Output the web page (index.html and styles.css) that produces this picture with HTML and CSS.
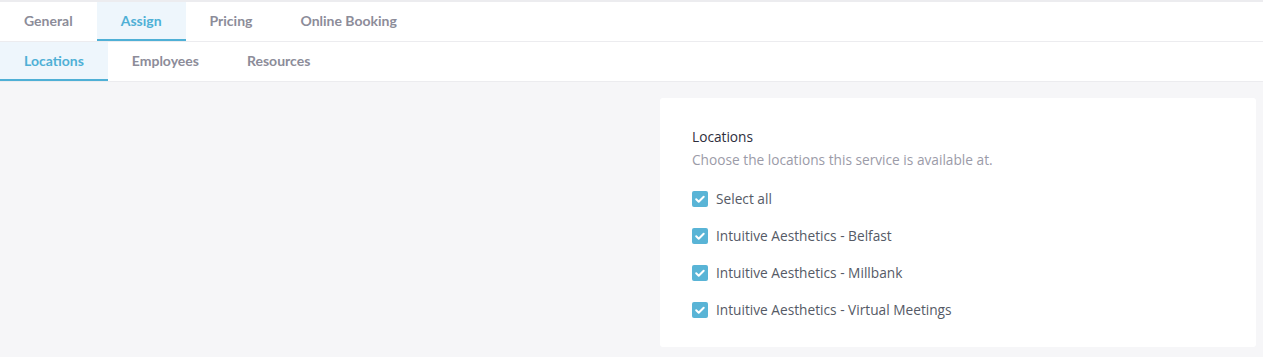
FILE: index.html
```html
<!DOCTYPE html>
<html>
  <head>
    <title>Service - Assign</title>
    <meta charset="UTF-8">
    <meta name="viewport" content="width=device-width, initial-scale=1.0">
    <link rel="stylesheet" href="styles.css">
  </head>
  <body>
    <nav class="tabs tabs-main">
      <a class="tab">General</a>
      <a class="tab active">Assign</a>
      <a class="tab">Pricing</a>
      <a class="tab">Online Booking</a>
    </nav>
    <nav class="tabs tabs-sub">
      <a class="tab active">Locations</a>
      <a class="tab">Employees</a>
      <a class="tab">Resources</a>
    </nav>

    <main class="content">
      <div class="side"></div>
      <section class="card">
        <h2 class="card-title">Locations</h2>
        <p class="card-hint">Choose the locations this service is available at.</p>
        <ul class="check-list">
          <li><label class="check"><span class="box"><svg viewBox="0 0 16 16"><path d="M4.2 8.3l2.5 2.4 5-5" /></svg></span>Select all</label></li>
          <li><label class="check"><span class="box"><svg viewBox="0 0 16 16"><path d="M4.2 8.3l2.5 2.4 5-5" /></svg></span>Intuitive Aesthetics - Belfast</label></li>
          <li><label class="check"><span class="box"><svg viewBox="0 0 16 16"><path d="M4.2 8.3l2.5 2.4 5-5" /></svg></span>Intuitive Aesthetics - Millbank</label></li>
          <li><label class="check"><span class="box"><svg viewBox="0 0 16 16"><path d="M4.2 8.3l2.5 2.4 5-5" /></svg></span>Intuitive Aesthetics - Virtual Meetings</label></li>
        </ul>
      </section>
    </main>
  </body>
</html>
```

FILE: styles.css
```css
* {
  box-sizing: border-box;
  margin: 0;
  padding: 0;
}

body {
  font-family: Lato, "Open Sans", sans-serif;
  font-size: 14px;
  background-color: #f6f6f8;
  color: #555a66;
  height: 357px;
  overflow: hidden;
}

.tabs {
  display: flex;
  background-color: #fff;
  border-bottom: 1px solid #ececef;
}

.tabs-main {
  border-top: 2px solid #ececef;
}

.tab {
  display: flex;
  align-items: center;
  height: 39px;
  padding: 0 24px;
  color: #8c8c99;
  font-weight: bold;
  border-bottom: 2px solid transparent;
  cursor: pointer;
}

.tab.active {
  color: #4fb0d6;
  background-color: #eef6fc;
  border-bottom-color: #4fb0d6;
}

.content {
  display: grid;
  grid-template-columns: 628px 1fr;
  column-gap: 16px;
  padding: 16px 7px 0 16px;
}

.card {
  background-color: #fff;
  border-radius: 3px;
  padding: 30px 32px 27px;
  font-family: "Open Sans", Lato, sans-serif;
}

.card-title {
  font-size: 13.7px;
  font-weight: normal;
  line-height: 18px;
  color: #2e2e3c;
  margin-bottom: 5px;
}

.card-hint {
  font-size: 13.7px;
  line-height: 18px;
  color: #9b9ba8;
}

.check-list {
  list-style: none;
  margin-top: 19px;
  display: flex;
  flex-direction: column;
  gap: 16px;
}

.check {
  display: flex;
  align-items: center;
  gap: 8px;
  height: 21px;
  font-size: 13.7px;
  color: #555a66;
}

.box {
  width: 16px;
  height: 16px;
  border-radius: 2px;
  background-color: #59b4d6;
  display: flex;
}

.box svg {
  width: 16px;
  height: 16px;
  fill: none;
  stroke: #fff;
  stroke-width: 2;
  stroke-linecap: round;
  stroke-linejoin: round;
}
```
